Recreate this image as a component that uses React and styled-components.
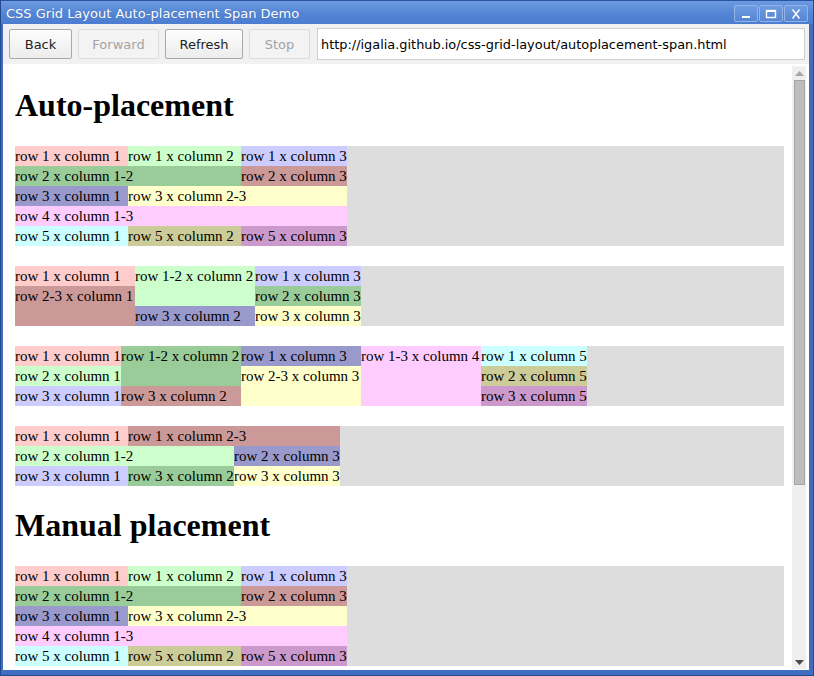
import styled, { createGlobalStyle } from "styled-components";

const GlobalStyle = createGlobalStyle`
  html, body { margin: 0; padding: 0; }
  body { width: 814px; height: 676px; overflow: hidden; background: #3f6dbf; }
`;

const C = {
  pink: "#ffcccc",
  lgreen: "#ccffcc",
  lblue: "#ccccff",
  green: "#99cc99",
  rose: "#cc9999",
  slate: "#9999cc",
  yellow: "#ffffcc",
  lilac: "#ffccff",
  cyan: "#ccffff",
  olive: "#cccc99",
  plum: "#cc99cc",
};

const firstGrid = {
  cols: [113, 113, 106],
  rows: 5,
  items: [
    ["1", "1", C.pink, "row 1 x column 1"],
    ["1", "2", C.lgreen, "row 1 x column 2"],
    ["1", "3", C.lblue, "row 1 x column 3"],
    ["2", "1 / span 2", C.green, "row 2 x column 1-2"],
    ["2", "3", C.rose, "row 2 x column 3"],
    ["3", "1", C.slate, "row 3 x column 1"],
    ["3", "2 / span 2", C.yellow, "row 3 x column 2-3"],
    ["4", "1 / span 3", C.lilac, "row 4 x column 1-3"],
    ["5", "1", C.cyan, "row 5 x column 1"],
    ["5", "2", C.olive, "row 5 x column 2"],
    ["5", "3", C.plum, "row 5 x column 3"],
  ],
};

const autoGrids = [
  firstGrid,
  {
    cols: [120, 120, 106],
    rows: 3,
    items: [
      ["1", "1", C.pink, "row 1 x column 1"],
      ["1 / span 2", "2", C.lgreen, "row 1-2 x column 2"],
      ["1", "3", C.lblue, "row 1 x column 3"],
      ["2 / span 2", "1", C.rose, "row 2-3 x column 1"],
      ["2", "3", C.green, "row 2 x column 3"],
      ["3", "2", C.slate, "row 3 x column 2"],
      ["3", "3", C.yellow, "row 3 x column 3"],
    ],
  },
  {
    cols: [106, 120, 120, 120, 106],
    rows: 3,
    items: [
      ["1", "1", C.pink, "row 1 x column 1"],
      ["1 / span 2", "2", C.green, "row 1-2 x column 2"],
      ["1", "3", C.slate, "row 1 x column 3"],
      ["1 / span 3", "4", C.lilac, "row 1-3 x column 4"],
      ["1", "5", C.cyan, "row 1 x column 5"],
      ["2", "1", C.lgreen, "row 2 x column 1"],
      ["2 / span 2", "3", C.yellow, "row 2-3 x column 3"],
      ["2", "5", C.olive, "row 2 x column 5"],
      ["3", "1", C.lblue, "row 3 x column 1"],
      ["3", "2", C.rose, "row 3 x column 2"],
      ["3", "5", C.plum, "row 3 x column 5"],
    ],
  },
  {
    cols: [113, 106, 106],
    rows: 3,
    items: [
      ["1", "1", C.pink, "row 1 x column 1"],
      ["1", "2 / span 2", C.rose, "row 1 x column 2-3"],
      ["2", "1 / span 2", C.lgreen, "row 2 x column 1-2"],
      ["2", "3", C.slate, "row 2 x column 3"],
      ["3", "1", C.lblue, "row 3 x column 1"],
      ["3", "2", C.green, "row 3 x column 2"],
      ["3", "3", C.yellow, "row 3 x column 3"],
    ],
  },
];

function DemoGrid({ grid }) {
  return (
    <Grid $cols={grid.cols.map((w) => w + "px").join(" ")} $rows={grid.rows}>
      {grid.items.map(([row, col, bg, text]) => (
        <Cell key={text + row + col} $row={row} $col={col} $bg={bg}>
          {text}
        </Cell>
      ))}
    </Grid>
  );
}

export default function App() {
  return (
    <>
      <GlobalStyle />
      <Window>
        <TitleBar>
          <Title>CSS Grid Layout Auto-placement Span Demo</Title>
          <WinButtons>
            <WinButton>
              <svg width="12" height="12" viewBox="0 0 12 12">
                <rect x="2" y="8" width="8" height="2" fill="#fff" />
              </svg>
            </WinButton>
            <WinButton>
              <svg width="12" height="12" viewBox="0 0 12 12">
                <rect x="1.5" y="2.5" width="9" height="7" fill="none" stroke="#fff" strokeWidth="1.4" />
                <rect x="1.5" y="2" width="9" height="2" fill="#fff" />
              </svg>
            </WinButton>
            <WinButton>
              <svg width="12" height="12" viewBox="0 0 12 12">
                <path d="M2.5 1.5 L9.5 10.5 M9.5 1.5 L2.5 10.5" stroke="#fff" strokeWidth="1.4" fill="none" />
              </svg>
            </WinButton>
          </WinButtons>
        </TitleBar>
        <Client>
          <Toolbar>
            <NavButton $w={63}>Back</NavButton>
            <NavButton $w={81} disabled>Forward</NavButton>
            <NavButton $w={78}>Refresh</NavButton>
            <NavButton $w={61} disabled>Stop</NavButton>
            <UrlBox>http://igalia.github.io/css-grid-layout/autoplacement-span.html</UrlBox>
          </Toolbar>
          <ContentRow>
            <Viewport>
              <Page>
                <Heading>Auto-placement</Heading>
                {autoGrids.map((g, i) => (
                  <DemoGrid key={i} grid={g} />
                ))}
                <Heading>Manual placement</Heading>
                <DemoGrid grid={firstGrid} />
              </Page>
            </Viewport>
            <Scrollbar>
              <Arrow>
                <svg width="9" height="5" viewBox="0 0 9 5">
                  <path d="M0 5 L4.5 0 L9 5 Z" fill="#a6a6a6" />
                </svg>
              </Arrow>
              <Thumb />
              <Track />
              <Arrow>
                <svg width="9" height="5" viewBox="0 0 9 5">
                  <path d="M0 0 L9 0 L4.5 5 Z" fill="#4a4a4a" />
                </svg>
              </Arrow>
            </Scrollbar>
          </ContentRow>
        </Client>
      </Window>
    </>
  );
}

const Window = styled.div`
  width: 814px;
  height: 676px;
  box-sizing: border-box;
  display: flex;
  flex-direction: column;
  background: #3f6dbf;
  border: 1px solid #25478c;
  border-top-color: #2b52a0;
`;

const TitleBar = styled.div`
  height: 23px;
  flex: none;
  display: flex;
  align-items: center;
  justify-content: space-between;
  padding: 0 5px 0 5px;
  background: linear-gradient(#6d9be0, #5385d6 55%, #4c7dd0);
`;

const Title = styled.span`
  font-family: "DejaVu Sans", sans-serif;
  font-size: 13px;
  color: #ffffff;
  text-shadow: 0 0 1px rgba(20, 40, 90, 0.35);
  margin-top: 1px;
`;

const WinButtons = styled.div`
  display: flex;
  gap: 1px;
  margin-top: 2px;
`;

const WinButton = styled.div`
  width: 22px;
  height: 15px;
  display: flex;
  align-items: center;
  justify-content: center;
  border: 1px solid #94b4e8;
  border-radius: 2px;
  background: linear-gradient(#6f9ce0, #5585d4);
`;

const Client = styled.div`
  flex: 1;
  display: flex;
  flex-direction: column;
  margin: 0 4px 5px 2px;
  background: #ffffff;
  min-height: 0;
`;

const Toolbar = styled.div`
  height: 40px;
  flex: none;
  display: flex;
  align-items: center;
  gap: 6px;
  padding: 0 4px 0 6px;
  background: #f1f1f1;
`;

const NavButton = styled.div`
  width: ${(p) => p.$w}px;
  height: 30px;
  box-sizing: border-box;
  display: flex;
  align-items: center;
  justify-content: center;
  font-family: "DejaVu Sans", sans-serif;
  font-size: 13px;
  color: ${(p) => (p.disabled ? "#a3a3a3" : "#222222")};
  border: 1px solid ${(p) => (p.disabled ? "#dcdcdc" : "#a9a9a9")};
  border-radius: 2px;
  background: ${(p) =>
    p.disabled ? "#f3f3f3" : "linear-gradient(#fdfdfd, #ececec)"};
`;

const UrlBox = styled.div`
  flex: 1;
  height: 32px;
  margin-left: 1px;
  box-sizing: border-box;
  display: flex;
  align-items: center;
  padding-left: 3px;
  font-family: "DejaVu Sans", sans-serif;
  font-size: 12.9px;
  color: #000000;
  background: #ffffff;
  border: 1px solid #cfcfcf;
`;

const ContentRow = styled.div`
  flex: 1;
  display: flex;
  min-height: 0;
  padding: 2px 3px 1px 4px;
  background: #ffffff;
`;

const Viewport = styled.div`
  flex: 1;
  overflow: hidden;
  background: #ffffff;
`;

const Page = styled.div`
  padding: 0 8px;
  font-family: "Liberation Serif", "Times New Roman", serif;
  font-size: 16px;
  color: #000000;
`;

const Heading = styled.h1`
  font-size: 32px;
  font-weight: bold;
  margin: 21.44px 0;
`;

const Grid = styled.div`
  display: grid;
  grid-template-columns: ${(p) => p.$cols};
  grid-template-rows: repeat(${(p) => p.$rows}, 20px);
  background: #dddddd;
  margin-bottom: 20px;
  font-size: 15px;
`;

const Cell = styled.div`
  grid-row: ${(p) => p.$row};
  grid-column: ${(p) => p.$col};
  background: ${(p) => p.$bg};
  line-height: 20px;
  white-space: nowrap;
`;

const Scrollbar = styled.div`
  width: 14px;
  flex: none;
  display: flex;
  flex-direction: column;
  background: #efefef;
`;

const Arrow = styled.div`
  height: 14px;
  flex: none;
  display: flex;
  align-items: center;
  justify-content: center;
`;

const Thumb = styled.div`
  height: 405px;
  flex: none;
  margin: 0 1px 0 2px;
  box-sizing: border-box;
  background: #bdbdbd;
  border: 1px solid #a4a4a4;
`;

const Track = styled.div`
  flex: 1;
`;
